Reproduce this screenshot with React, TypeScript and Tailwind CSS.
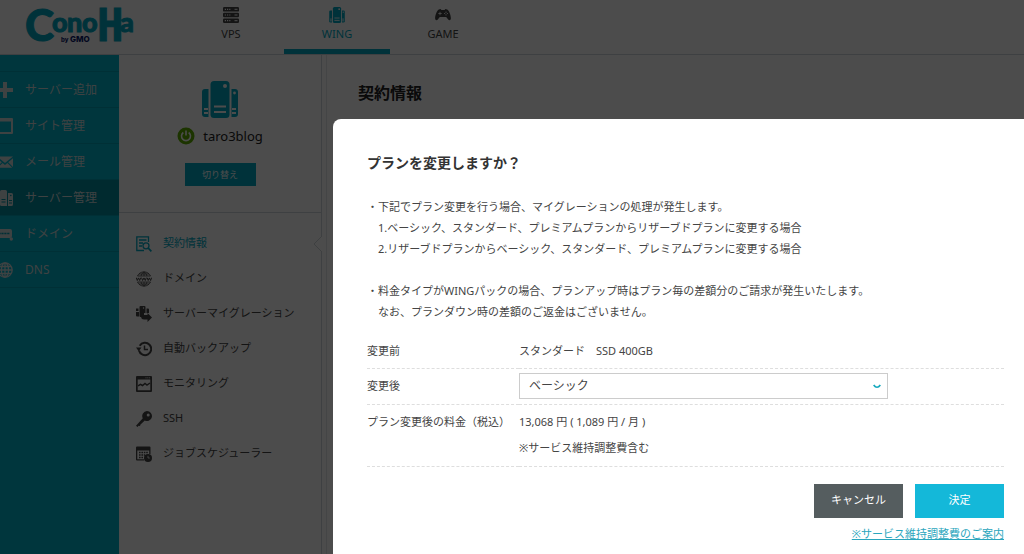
import type { ReactNode } from "react";

const products = [
  { label: "VPS", icon: <VpsIcon />, active: false },
  { label: "WING", icon: <WingIcon className="h-4 w-4" />, active: true },
  { label: "GAME", icon: <GameIcon />, active: false },
];

const mainMenu = [
  { label: "サーバー追加", icon: <PlusIcon />, active: false },
  { label: "サイト管理", icon: <WindowIcon />, active: false },
  { label: "メール管理", icon: <MailIcon />, active: false },
  { label: "サーバー管理", icon: <ServersIcon />, active: true },
  { label: "ドメイン", icon: <DomainIcon />, active: false },
  { label: "DNS", icon: <GlobeIcon />, active: false },
];

const subMenu = [
  { label: "契約情報", icon: <ContractIcon />, active: true },
  { label: "ドメイン", icon: <WwwIcon />, active: false },
  { label: "サーバーマイグレーション", icon: <MigrationIcon />, active: false },
  { label: "自動バックアップ", icon: <BackupIcon />, active: false },
  { label: "モニタリング", icon: <MonitorIcon />, active: false },
  { label: "SSH", icon: <KeyIcon />, active: false },
  { label: "ジョブスケジューラー", icon: <SchedulerIcon />, active: false },
];

function Svg({ children, className = "h-4 w-4", box = "0 0 16 16" }: { children: ReactNode; className?: string; box?: string }) {
  return (
    <svg viewBox={box} className={className} fill="currentColor" aria-hidden="true">
      {children}
    </svg>
  );
}

function VpsIcon() {
  return (
    <Svg>
      {[0, 5.7, 11.4].map((y) => (
        <g key={y}>
          <rect x="0" y={y} width="16" height="4.6" rx="1.2" />
          <path d={`M1.8 ${y + 2.3}h6`} stroke="#fff" strokeWidth="1.2" strokeDasharray="1.2 1" />
          <path d={`M11.5 ${y + 2.3}h3`} stroke="#fff" strokeWidth="1" />
        </g>
      ))}
    </Svg>
  );
}

function WingIcon({ className }: { className: string }) {
  return (
    <Svg className={className} box="0 0 36 37">
      <path d="M6.5 8v28H3a3 3 0 0 1-3-3V11a3 3 0 0 1 3-3z" />
      <path d="M29.5 8v28H33a3 3 0 0 0 3-3V11a3 3 0 0 0-3-3z" />
      <rect x="8.5" y="0" width="19" height="37" rx="3.5" />
      <circle cx="23" cy="5" r="2" fill="#fff" />
      <circle cx="32.5" cy="12" r="1.4" fill="#fff" />
      <path d="M12 25.500h12M12 31h12M2 28h4M2 32h4M30 28h4M30 32h4" stroke="#fff" strokeWidth="2" />
    </Svg>
  );
}

function GameIcon() {
  return (
    <Svg className="h-4 w-4">
      <path d="M3.8 2.600 5.600 2l.8 1h3.200l.8-1 1.800.6c1.800.8 3.600 5.600 3.700 8.600 0 2-1.700 2.500-2.700 1.300l-2-2.500H4.800l-2 2.500C1.800 13.700.1 13.200.1 11.200.2 8.200 2 3.400 3.800 2.600z" />
      <path d="M3.300 6.500h3.400M5 4.800v3.400" stroke="#fff" strokeWidth=".8" />
      <circle cx="11" cy="5.200" r=".6" fill="#fff" />
      <circle cx="11" cy="7.800" r=".6" fill="#fff" />
      <circle cx="9.600" cy="6.500" r=".6" fill="#fff" />
      <circle cx="12.400" cy="6.500" r=".6" fill="#fff" />
    </Svg>
  );
}

function PlusIcon() {
  return (
    <Svg>
      <path d="M6 0h4v6h6v4h-6v6H6v-6H0V6h6z" />
    </Svg>
  );
}

function WindowIcon() {
  return (
    <Svg>
      <path fillRule="evenodd" d="M1 0h14a1 1 0 0 1 1 1v14a1 1 0 0 1-1 1H1a1 1 0 0 1-1-1V1a1 1 0 0 1 1-1zm1 3.500v10.500h12V3.500z" />
    </Svg>
  );
}

function MailIcon() {
  return (
    <Svg>
      <path d="M0 2.500h16L8 9z" />
      <path d="M0 4.200 4.800 8.200 0 13zM16 4.200 11.200 8.200 16 13zM5.600 9 8 10.900 10.400 9l4.800 4.700H.8z" />
    </Svg>
  );
}

function ServersIcon() {
  return (
    <Svg>
      <path d="M0 3h2v12H0zM3 1.500A1.500 1.500 0 0 1 4.500 0h4A1.500 1.500 0 0 1 10 1.500V16H4.500A1.500 1.500 0 0 1 3 14.500zM11 3h3.500A1.500 1.500 0 0 1 16 4.500v10a1.500 1.500 0 0 1-1.500 1.500H11z" />
      <path d="M4.500 9.500h4M4.500 12h4M12 10.500h3M12 13h3" stroke="#008c9e" strokeWidth="1" />
      <circle cx="13.800" cy="5.500" r=".8" fill="#008c9e" />
    </Svg>
  );
}

function DomainIcon() {
  return (
    <Svg>
      <rect x="0" y="3" width="15" height="9" rx="2" />
      <path d="M1.500 7.500h11" stroke="#009db3" strokeWidth="1.600" strokeDasharray="2.200 .7" />
      <circle cx="14.300" cy="13" r="1.700" />
    </Svg>
  );
}

function GlobeIcon() {
  return (
    <Svg>
      <g fill="none" stroke="currentColor" strokeWidth="1.300">
        <circle cx="8" cy="8" r="7.200" />
        <ellipse cx="8" cy="8" rx="3.600" ry="7.200" />
        <path d="M8 1v14M1 8h14M2 4.500h12M2 11.500h12" />
      </g>
    </Svg>
  );
}

function ContractIcon() {
  return (
    <Svg>
      <g fill="none" stroke="currentColor" strokeWidth="1.300">
        <path d="M12.500 6V.8H.8v13.700H8M3 4h7.500M3 7h4M3 10h3" />
        <circle cx="10" cy="9.800" r="3" />
        <path d="m12.200 12 3.200 3.400" strokeWidth="1.800" />
      </g>
    </Svg>
  );
}

function WwwIcon() {
  return (
    <Svg>
      <g fill="none" stroke="currentColor" strokeWidth=".8">
        <path d="M1.500 5a7.200 7.200 0 0 1 13 0zM1.500 11a7.200 7.200 0 0 0 13 0zM8 1v4M8 11v4M5 5q.6-3 3-4.200Q10.400 2 11 5M5 11q.6 3 3 4.200 2.400-1.200 3-4.200M3 3h10M3 13h10" />
        <path strokeWidth="1" d="m.3 6.700 1 2.800 1.200-2.600 1.200 2.600 1-2.800m.9 0 1 2.800L8 6.900l1.300 2.600 1-2.800m.9 0 1 2.800 1.200-2.600 1.200 2.600 1-2.800" />
      </g>
    </Svg>
  );
}

function MigrationIcon() {
  return (
    <Svg>
      <path d="M0 2.500h2.500V5H0zM0 6h3v4.500H1A1 1 0 0 1 0 9.500zM3.500 1a1 1 0 0 1 1-1h4a1 1 0 0 1 1 1v6H8v4H4.500a1 1 0 0 1-1-1zM10.500 2.500H12a1 1 0 0 1 1 1V7h-2.500z" />
      <path d="M8 9h3.500V7L16 11.500 11.500 16v-2.500H8A3 3 0 0 1 5 11z" />
      <circle cx="7.500" cy="2" r=".7" fill="#fff" />
    </Svg>
  );
}

function BackupIcon() {
  return (
    <Svg>
      <path d="M3 9.500a6.200 6.200 0 1 0 .7-4.700" fill="none" stroke="currentColor" strokeWidth="2" />
      <path d="M0 6.500h5.500L2.700 10.200z" />
      <path d="M8.500 4.500v4h3.500" fill="none" stroke="currentColor" strokeWidth="1.500" />
    </Svg>
  );
}

function MonitorIcon() {
  return (
    <Svg>
      <path fillRule="evenodd" d="M1 0h14a1 1 0 0 1 1 1v14a1 1 0 0 1-1 1H1a1 1 0 0 1-1-1V1a1 1 0 0 1 1-1zm.7 3.500v10.800h12.600V3.500z" />
      <path d="m2 9.800 2.500-1.500 2 1.200 2.500-2 2 1.500L14 7" fill="none" stroke="currentColor" strokeWidth="1.500" />
      <path d="M9.500 1.800h4.500" stroke="#fff" strokeWidth=".8" strokeDasharray="1 .8" />
    </Svg>
  );
}

function KeyIcon() {
  return (
    <Svg>
      <path fillRule="evenodd" d="M11 0a5 5 0 1 1-2.200 9.500L4.500 13.500 4 15l-1.500-.2L1.500 16 0 14.700l6.800-7.400A5 5 0 0 1 11 0zm1.200 2.500a1.500 1.500 0 1 0 0 3 1.500 1.500 0 0 0 0-3z" />
    </Svg>
  );
}

function SchedulerIcon() {
  return (
    <Svg>
      <path fillRule="evenodd" d="M1 .5h12.500a1 1 0 0 1 1 1V8h-1.300V4.500H1.300v8.700H8v1.300H1a1 1 0 0 1-1-1v-12a1 1 0 0 1 1-1z" />
      <path d="M3 6.500h9M3 9h6M3 11.500h4" stroke="currentColor" strokeWidth="1.400" strokeDasharray="1.600 .8" />
      <circle cx="12" cy="12" r="4" />
      <path d="M12 9.800V12h1.800" fill="none" stroke="#fff" strokeWidth=".8" />
    </Svg>
  );
}

function Logo() {
  return (
    <svg viewBox="0 0 120 54" className="h-[54px] w-[120px] overflow-visible" role="img" aria-label="ConoHa by GMO">
      <text y="41" fill="#00a9c4" stroke="#00a9c4" strokeWidth="1" fontFamily="Lato, sans-serif" fontWeight="900" fontSize="27">
        <tspan x="-1" fontSize="44">C</tspan>
        <tspan x="26" y="32">o</tspan>
        <tspan x="41">n</tspan>
        <tspan x="56">o</tspan>
        <tspan x="71" y="41" fontFamily="'DejaVu Sans Mono', monospace" fontWeight="700" fontSize="44">H</tspan>
        <tspan x="94" y="32">a</tspan>
      </text>
      <text y="42" fill="#0b1a6b" fontFamily="Inter, sans-serif" fontWeight="800" fontSize="8">
        <tspan x="35" fontSize="6">by</tspan>
        <tspan x="44">GMO</tspan>
      </text>
    </svg>
  );
}

function Header() {
  return (
    <header className="flex h-[55px] border-b border-gray-300 bg-white">
      <a href="#top" className="block w-[178px] shrink-0 pl-[26px]">
        <Logo />
      </a>
      <nav className="flex">
        {products.map((p) => (
          <a
            key={p.label}
            href={`#${p.label}`}
            className={`flex w-[106px] flex-col items-center border-b-[5px] pt-[7px] text-[11px] leading-4 ${
              p.active ? "border-[#00a9c4] text-[#00a9c4]" : "border-transparent text-[#444444]"
            }`}
          >
            {p.icon}
            <span className="mt-[3px]">{p.label}</span>
          </a>
        ))}
      </nav>
    </header>
  );
}

function MainMenu() {
  return (
    <nav className="w-[119px] shrink-0 overflow-hidden bg-[#00b4cc] pt-4">
      <ul className="border-t border-[#00a0b6]">
        {mainMenu.map((m) => (
          <li key={m.label}>
            <a
              href={`#${m.label}`}
              className={`-ml-[3px] flex h-9 items-center gap-3 border-b border-[#00a0b6] text-xs text-[#cfdcde] ${
                m.active ? "bg-[#008c9e]" : ""
              }`}
            >
              <span className="shrink-0">{m.icon}</span>
              <span className="whitespace-nowrap">{m.label}</span>
            </a>
          </li>
        ))}
      </ul>
    </nav>
  );
}

function ServerPanel() {
  return (
    <aside className="w-[203px] shrink-0 border-r border-gray-300">
      <div className="flex flex-col items-center border-b border-gray-300 pt-[26px] pb-[26px] text-[#00a9c4]">
        <WingIcon className="h-[37px] w-9" />
        <div className="mt-2 flex items-center gap-2">
          <svg viewBox="0 0 18 18" className="h-[18px] w-[18px]" aria-hidden="true">
            <circle cx="9" cy="9" r="8.500" fill="#5fae00" />
            <path d="M6.300 5.500a4.500 4.500 0 1 0 5.400 0M9 3.500v5" fill="none" stroke="#fff" strokeWidth="1.600" />
          </svg>
          <span className="text-[13px] leading-5 text-[#222222]">taro3blog</span>
        </div>
        <button type="button" className="mt-[17px] h-[23px] w-[71px] bg-[#00a9c4] text-[9px] text-white">
          切り替え
        </button>
      </div>
      <ul className="pt-[13px]">
        {subMenu.map((s) => (
          <li key={s.label} className="relative">
            <a
              href={`#${s.label}`}
              className={`flex h-[35px] items-center gap-[11px] pl-[17px] text-[11px] ${
                s.active ? "text-[#00a9c4]" : "text-[#444444]"
              }`}
            >
              {s.icon}
              <span>{s.label}</span>
            </a>
            {s.active && (
              <svg viewBox="0 0 9 16" className="absolute top-2.5 -right-px h-4 w-[9px]" aria-hidden="true">
                <path d="M9 0 1 8l8 8" fill="#fff" stroke="#d1d5db" />
              </svg>
            )}
          </li>
        ))}
      </ul>
    </aside>
  );
}

function PlanDialog() {
  return (
    <section
      role="dialog"
      aria-modal="true"
      aria-labelledby="dialog-title"
      className="min-w-0 flex-1 rounded-tl-lg bg-white pt-[34px] pr-5 pl-[34px] text-[11px] text-[#444444]"
    >
      <h2 id="dialog-title" className="text-sm leading-5 font-bold text-[#333333]">
        プランを変更しますか？
      </h2>
      <div className="mt-[23px] leading-[21px]">
        <p>・下記でプラン変更を行う場合、マイグレーションの処理が発生します。</p>
        <p className="pl-[11px]">1.ベーシック、スタンダード、プレミアムプランからリザーブドプランに変更する場合</p>
        <p className="pl-[11px]">2.リザーブドプランからベーシック、スタンダード、プレミアムプランに変更する場合</p>
        <p className="mt-[21px]">・料金タイプがWINGパックの場合、プランアップ時はプラン毎の差額分のご請求が発生いたします。</p>
        <p className="pl-[11px]">なお、プランダウン時の差額のご返金はございません。</p>
      </div>
      <table className="mt-3 w-full border-collapse text-left leading-[18px]">
        <tbody>
          <tr className="h-[34px] border-b border-dashed border-[#dedede]">
            <th scope="row" className="w-[152px] font-normal">変更前</th>
            <td>スタンダード　SSD 400GB</td>
          </tr>
          <tr className="h-9 border-b border-dashed border-[#dedede]">
            <th scope="row" className="font-normal">
              <label htmlFor="plan">変更後</label>
            </th>
            <td>
              <div className="relative max-w-[369px]">
                <select
                  id="plan"
                  defaultValue="basic"
                  className="block h-[26px] w-full appearance-none border border-[#cccccc] bg-white pl-[9px] text-xs"
                >
                  <option value="basic">ベーシック</option>
                  <option value="standard">スタンダード</option>
                  <option value="premium">プレミアム</option>
                </select>
                <svg viewBox="0 0 8 5" className="pointer-events-none absolute top-[11px] right-[7px] h-[5px] w-2" aria-hidden="true">
                  <path d="M.7 1Q4 5.500 7.300 1" fill="none" stroke="#14a8bd" strokeWidth="1.700" />
                </svg>
              </div>
            </td>
          </tr>
          <tr className="border-b border-dashed border-[#dedede] align-top">
            <th scope="row" className="pt-2 font-normal">プラン変更後の料金（税込）</th>
            <td className="pt-2 pb-[9px]">
              <p>13,068 円 ( 1,089 円 / 月 )</p>
              <p className="mt-2">※サービス維持調整費含む</p>
            </td>
          </tr>
        </tbody>
      </table>
      <div className="mt-[17px] flex justify-end gap-3">
        <button type="button" className="h-[34px] w-[89px] bg-[#555d5f] text-white">キャンセル</button>
        <button type="button" className="h-[34px] w-[89px] bg-[#14b8d9] text-white">決定</button>
      </div>
      <p className="mt-1.5 text-right leading-5">
        <a href="#fee" className="text-[#2ba6bd] underline">※サービス維持調整費のご案内</a>
      </p>
    </section>
  );
}

export default function App() {
  return (
    <div className="flex min-h-screen flex-col bg-white font-['Noto_Sans','Noto_Sans_CJK_JP',sans-serif]">
      <Header />
      <div className="flex flex-1">
        <MainMenu />
        <ServerPanel />
        <main className="ml-1 flex-1 border-l border-gray-200 pt-7 pl-[31px]">
          <h1 className="text-base leading-5 font-bold text-[#222222]">契約情報</h1>
        </main>
      </div>
      <div className="fixed inset-0 flex bg-black/70 pt-[119px] pl-[333px]">
        <PlanDialog />
      </div>
    </div>
  );
}
